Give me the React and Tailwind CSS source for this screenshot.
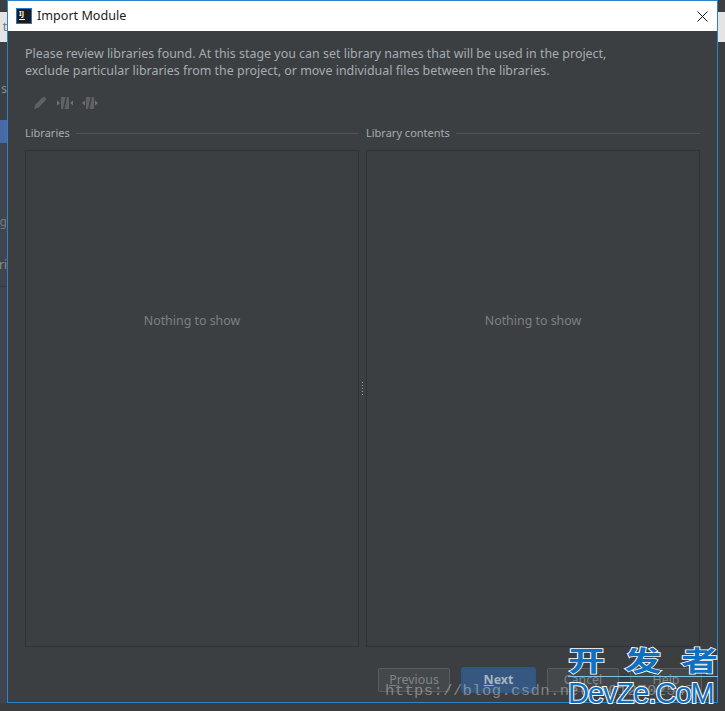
import React from 'react';

const TitleBar = () => (
  <div className="h-[30px] bg-white flex items-center shrink-0">
    <div className="ml-2 w-4 h-4 bg-[#1c1c1c] border border-[#1a7bd0] flex flex-col items-start pl-[2px] pt-[1px]">
      <span className="text-[7px] leading-[8px] font-bold text-white">IJ</span>
      <span className="w-[6px] h-px bg-white mt-[1px]"></span>
    </div>
    <span className="ml-[5px] text-[12.6px] text-[#222]">Import Module</span>
    <svg className="ml-auto mr-[9px]" width="11" height="11" viewBox="0 0 11 11">
      <path d="M0.5 0.5L10.5 10.5M10.5 0.5L0.5 10.5" stroke="#111" strokeWidth="1" fill="none" />
    </svg>
  </div>
);

const Toolbar = () => (
  <div className="flex items-center h-4 mt-[16px] ml-[8px]">
    <svg width="14" height="14" viewBox="0 0 14 14">
      <path d="M1 13L2.5 8.5L9.5 1.5Q11 0.5 12.5 1.5Q13.5 3 12.5 4.5L5.5 11.5Z" fill="#5f6163" />
    </svg>
    <svg className="ml-[10px]" width="16" height="14" viewBox="0 0 16 14">
      <path d="M0 4.5L3 7L0 9.5Z" fill="#707274" />
      <path d="M4 1H12V13H4Z" fill="#5f6163" />
      <path d="M8.5 1L10 1L7.5 13L6 13Z" fill="#3c3f41" />
      <path d="M16 4.5L13 7L16 9.5Z" fill="#707274" />
    </svg>
    <svg className="ml-[9px]" width="16" height="14" viewBox="0 0 16 14">
      <path d="M3 4.5L0 7L3 9.5Z" fill="#707274" />
      <path d="M4 1H12V13H4Z" fill="#5f6163" />
      <path d="M8.5 1L10 1L7.5 13L6 13Z" fill="#3c3f41" />
      <path d="M13 4.5L16 7L13 9.5Z" fill="#707274" />
    </svg>
  </div>
);

const Panel = ({ title }) => (
  <div className="w-[334px] flex flex-col">
    <div className="flex items-center h-[18px] gap-[6px]">
      <span className="text-[11px] pt-[1px] text-[#a3adb3]">{title}</span>
      <span className="flex-1 h-px bg-[#515355]"></span>
    </div>
    <div className="h-[497px] mt-[8px] border border-[#303234] flex items-center justify-center pb-[154px]">
      <span className="text-[12.4px] text-[#7d8082]">Nothing to show</span>
    </div>
  </div>
);

const Btn = ({ u, rest, primary, w }) => (
  <div
    className={
      primary
        ? 'h-[26px] border-2 border-[#2f5785] rounded-[3px] bg-[#365880] flex items-center justify-center text-[12.4px] font-bold text-[#a9b4c2]'
        : 'h-[24px] border border-[#5a5d5f] rounded-[2px] bg-[#45484a] flex items-center justify-center text-[12.4px] text-[#808486]'
    }
    style={{ width: w }}
  >
    <span className="underline">{u}</span>
    {rest}
  </div>
);

export default function App() {
  return (
    <div className="relative w-[725px] h-[711px] overflow-hidden bg-[#3a3c3e] font-['Noto_Sans',sans-serif]">
      <div className="flex h-[703px]">
        {/* IDE behind the dialog */}
        <div className="w-[7px] shrink-0 flex flex-col overflow-hidden text-[12px] leading-[16px] text-[#8a8d90]">
          <div className="h-[12px] bg-[#3c3f41]"></div>
          <div className="h-[30px] bg-[#e4e4e4] flex items-center justify-end text-[#777]">t</div>
          <div className="h-[78px] bg-[#3c4043] flex items-center justify-end pt-[15px]">s</div>
          <div className="h-[23px] bg-[#4a6aa5]"></div>
          <div className="h-[87px] bg-[#41444c] flex items-end justify-end text-[#777a7d]">ng</div>
          <div className="h-[27px] bg-[#41444c]"></div>
          <div className="h-[16px] bg-[#41444c] flex items-center justify-end text-[#8a8d90]">ri</div>
          <div className="h-[13px] bg-[#41444c]"></div>
          <div className="flex-1 bg-[#41444c] border-t border-[#35373a]"></div>
        </div>

        <div className="w-[711px] h-[703px] shrink-0 border border-[#2b83c9] flex flex-col bg-[#3c3f41]">
          <TitleBar />
          <div className="flex-1 pl-[17px] pr-[17px] flex flex-col">
            <p className="mt-[14px] text-[12.45px] leading-[17px] text-[#a3adb3]">
              Please review libraries found. At this stage you can set library names that will be used in the project,
              <br />
              exclude particular libraries from the project, or move individual files between the libraries.
            </p>
            <Toolbar />
            <div className="flex justify-between mt-[13px] relative">
              <Panel title="Libraries" />
              <Panel title="Library contents" />
              <div className="absolute left-[336px] top-[257px] w-[3px] h-[15px] bg-[radial-gradient(#9a9d9f_1px,transparent_1px)] bg-[length:3px_3px]"></div>
            </div>
            <div className="flex justify-end items-center gap-[11px] mt-[20px] -mr-[2px]">
              <Btn u="P" rest="revious" w={72} />
              <Btn u="N" rest="ext" primary w={75} />
              <Btn u="" rest="Cancel" w={72} />
              <Btn u="" rest="Help" w={72} />
            </div>
          </div>
        </div>

        <div className="w-[7px] shrink-0 flex flex-col">
          <div className="h-[12px] bg-[#3c3f41]"></div>
          <div className="h-[30px] bg-[#e4e4e4]"></div>
          <div className="flex-1 bg-[#3a3d40]"></div>
        </div>
      </div>

      {/* watermarks */}
      <div className="absolute left-[385px] top-[680px] text-[15.5px] tracking-[0.4px] text-[#c8c8c8]/50 font-['Liberation_Mono',monospace] whitespace-nowrap">
        https://blog.csdn.net/u012702547
      </div>
      <div className="absolute left-[568px] top-[643px] w-[150px] text-[#0f6fc0] [-webkit-text-stroke:2px_#ffffff] [paint-order:stroke]">
        <div className="flex justify-between text-[37px] leading-[33px] h-[33px] scale-y-[0.75] font-bold font-['Noto_Sans_CJK_SC',sans-serif]">
          <span>开</span>
          <span>发</span>
          <span>者</span>
        </div>
        <div className="border-t border-[#7fc4e8] text-[29px] tracking-[-1px] leading-[33px] font-['Liberation_Sans',sans-serif] whitespace-nowrap">
          DevZe.CoM
        </div>
      </div>
    </div>
  );
}
